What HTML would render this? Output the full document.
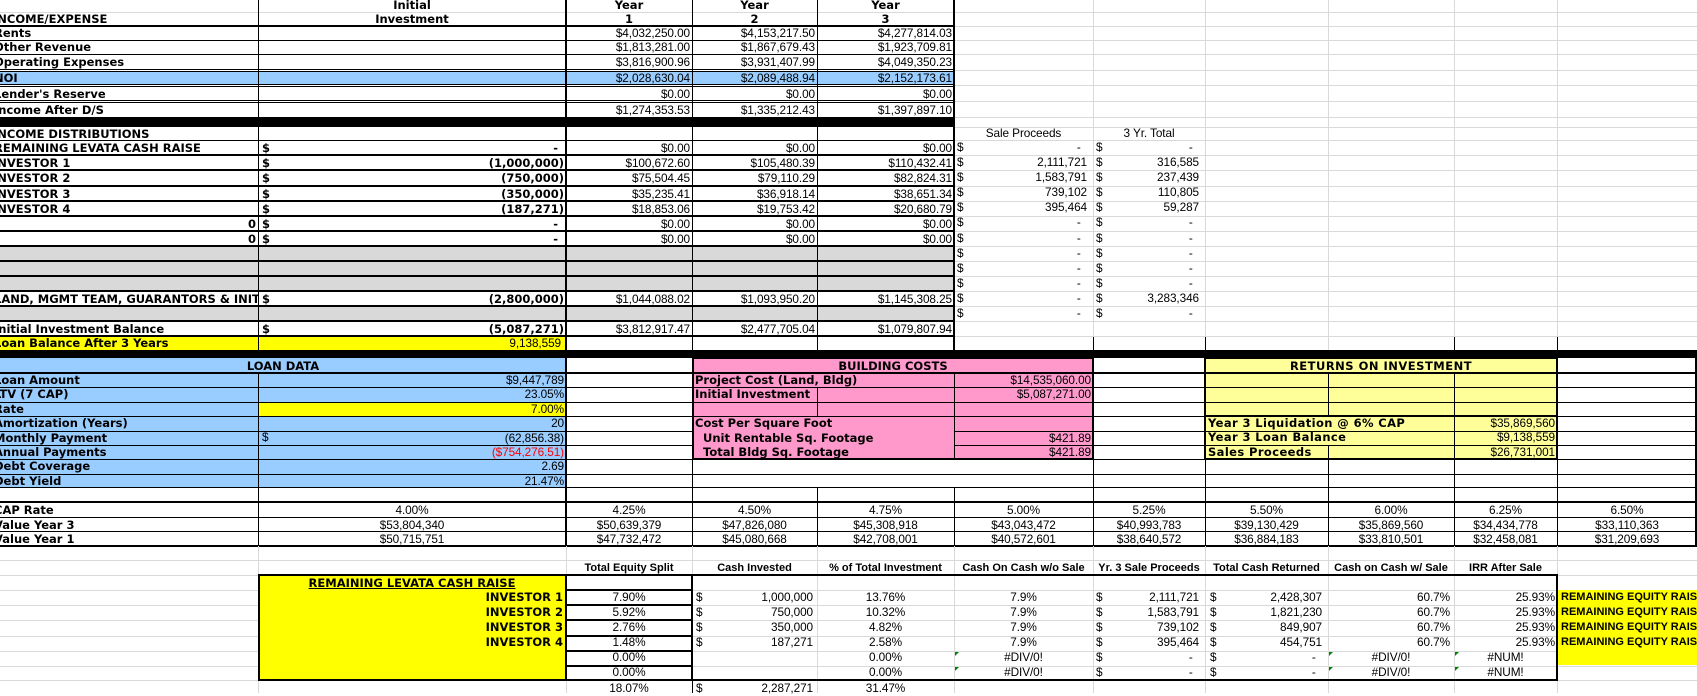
<!DOCTYPE html>
<html><head><meta charset="utf-8"><style>
*{margin:0;padding:0}
body{width:1697px;height:693px;overflow:hidden;background:#fff;position:relative;font-family:"Liberation Sans",Arial,sans-serif}
div{position:absolute}
.k{background:#000}
.g{background:#d9d9d9}
.t{white-space:nowrap;font-size:11.8px;letter-spacing:-0.1px;color:#000;overflow:visible}
.b{font-family:"DejaVu Sans",sans-serif;font-weight:bold;font-size:11.5px;letter-spacing:0}
.r{text-align:right}
.c{text-align:center}
.bx{box-sizing:border-box}
.hd{font-weight:bold;font-size:11px;letter-spacing:0}
</style></head><body>

<!-- light grid right area top -->
<div class="g" style="left:1093px;top:0;width:1px;height:350px"></div>
<div class="g" style="left:1205px;top:0;width:1px;height:350px"></div>
<div class="g" style="left:1328px;top:0;width:1px;height:350px"></div>
<div class="g" style="left:1454px;top:0;width:1px;height:350px"></div>
<div class="g" style="left:1557px;top:0;width:1px;height:350px"></div>
<div class="g" style="left:954px;top:12px;width:743px;height:1px"></div>
<div class="g" style="left:954px;top:26px;width:743px;height:1px"></div>
<div class="g" style="left:954px;top:40px;width:743px;height:1px"></div>
<div class="g" style="left:954px;top:54px;width:743px;height:1px"></div>
<div class="g" style="left:954px;top:70px;width:743px;height:1px"></div>
<div class="g" style="left:954px;top:85px;width:743px;height:1px"></div>
<div class="g" style="left:954px;top:101px;width:743px;height:1px"></div>
<div class="g" style="left:954px;top:117px;width:743px;height:1px"></div>
<div class="g" style="left:954px;top:127px;width:743px;height:1px"></div>
<div class="g" style="left:954px;top:140px;width:743px;height:1px"></div>
<div class="g" style="left:954px;top:155px;width:743px;height:1px"></div>
<div class="g" style="left:954px;top:170px;width:743px;height:1px"></div>
<div class="g" style="left:954px;top:186px;width:743px;height:1px"></div>
<div class="g" style="left:954px;top:201px;width:743px;height:1px"></div>
<div class="g" style="left:954px;top:216px;width:743px;height:1px"></div>
<div class="g" style="left:954px;top:231px;width:743px;height:1px"></div>
<div class="g" style="left:954px;top:246px;width:743px;height:1px"></div>
<div class="g" style="left:954px;top:261px;width:743px;height:1px"></div>
<div class="g" style="left:954px;top:276px;width:743px;height:1px"></div>
<div class="g" style="left:954px;top:291px;width:743px;height:1px"></div>
<div class="g" style="left:954px;top:306px;width:743px;height:1px"></div>
<div class="g" style="left:954px;top:321px;width:743px;height:1px"></div>
<div class="g" style="left:954px;top:336px;width:743px;height:1px"></div>

<!-- top table backgrounds -->
<div style="left:0;top:71px;width:954px;height:13px;background:#99ccff"></div>
<div style="left:0;top:246px;width:954px;height:45px;background:#d9d9d9"></div>
<div style="left:0;top:306px;width:954px;height:15px;background:#d9d9d9"></div>
<div style="left:0;top:336px;width:566px;height:14px;background:#ffff00"></div>

<!-- top horizontal lines -->
<div class="g" style="left:0;top:12px;width:954px;height:1px"></div>
<div class="k" style="left:0;top:25px;width:954px;height:2px"></div>
<div class="k" style="left:0;top:40px;width:954px;height:1px"></div>
<div class="k" style="left:0;top:54px;width:954px;height:1px"></div>
<div class="k" style="left:0;top:69px;width:954px;height:1px"></div>
<div class="k" style="left:0;top:71px;width:954px;height:1px"></div>
<div class="k" style="left:0;top:84px;width:954px;height:1px"></div>
<div class="k" style="left:0;top:86px;width:954px;height:1px"></div>
<div class="k" style="left:0;top:100px;width:954px;height:1px"></div>
<div class="k" style="left:0;top:102px;width:954px;height:1px"></div>
<div class="k" style="left:0;top:117px;width:954px;height:10px"></div>
<div class="k" style="left:0;top:140px;width:954px;height:1px"></div>
<div class="k" style="left:0;top:154px;width:954px;height:2px"></div>
<div class="k" style="left:0;top:169px;width:954px;height:2px"></div>
<div class="k" style="left:0;top:185px;width:954px;height:2px"></div>
<div class="k" style="left:0;top:200px;width:954px;height:2px"></div>
<div class="k" style="left:0;top:215px;width:954px;height:2px"></div>
<div class="k" style="left:0;top:230px;width:954px;height:2px"></div>
<div class="k" style="left:0;top:245px;width:954px;height:2px"></div>
<div class="k" style="left:0;top:260px;width:954px;height:2px"></div>
<div class="k" style="left:0;top:275px;width:954px;height:2px"></div>
<div class="k" style="left:0;top:290px;width:954px;height:2px"></div>
<div class="k" style="left:0;top:305px;width:954px;height:2px"></div>
<div class="k" style="left:0;top:320px;width:954px;height:2px"></div>
<div class="k" style="left:0;top:335px;width:954px;height:2px"></div>
<div class="k" style="left:0;top:350px;width:1697px;height:8px"></div>
<!-- top verticals -->
<div class="k" style="left:258px;top:0;width:1px;height:350px"></div>
<div class="k" style="left:565px;top:0;width:2px;height:350px"></div>
<div class="k" style="left:692px;top:0;width:1px;height:350px"></div>
<div class="k" style="left:817px;top:0;width:1px;height:350px"></div>
<div class="k" style="left:953px;top:0;width:2px;height:350px"></div>

<!-- middle section lines -->
<div style="left:0;top:358px;width:566px;height:130px;background:#99ccff"></div>
<div style="left:258px;top:402px;width:308px;height:14px;background:#ffff00"></div>
<div class="k" style="left:0;top:372px;width:1697px;height:2px"></div>
<div class="k" style="left:0;top:387px;width:1697px;height:1px"></div>
<div class="k" style="left:0;top:402px;width:1697px;height:1px"></div>
<div class="k" style="left:0;top:416px;width:1697px;height:1px"></div>
<div class="k" style="left:0;top:431px;width:1697px;height:1px"></div>
<div class="k" style="left:0;top:445px;width:1697px;height:1px"></div>
<div class="k" style="left:0;top:459px;width:1697px;height:1px"></div>
<div class="k" style="left:0;top:474px;width:1697px;height:1px"></div>
<div class="k" style="left:0;top:487px;width:1697px;height:1px"></div>
<div class="k" style="left:0;top:501px;width:1697px;height:2px"></div>
<div class="k" style="left:0;top:517px;width:1697px;height:1px"></div>
<div class="k" style="left:0;top:531px;width:1697px;height:1px"></div>
<div class="k" style="left:0;top:545px;width:1697px;height:2px"></div>
<div class="k" style="left:258px;top:373px;width:1px;height:115px"></div>
<div class="k" style="left:258px;top:488px;width:1px;height:58px"></div>
<div class="k" style="left:565px;top:358px;width:2px;height:188px"></div>
<div class="k" style="left:692px;top:358px;width:1px;height:188px"></div>
<div class="k" style="left:817px;top:488px;width:1px;height:58px"></div>
<div class="k" style="left:954px;top:488px;width:1px;height:58px"></div>
<div class="k" style="left:1093px;top:337px;width:1px;height:209px"></div>
<div class="k" style="left:1205px;top:337px;width:1px;height:209px"></div>
<div class="k" style="left:1328px;top:459px;width:1px;height:87px"></div>
<div class="k" style="left:1454px;top:337px;width:1px;height:209px"></div>
<div class="k" style="left:1557px;top:337px;width:1px;height:209px"></div>
<div class="k" style="left:1695px;top:358px;width:2px;height:188px"></div>

<!-- building costs pink -->
<div class="bx" style="left:692px;top:357px;width:402px;height:103px;background:#ff99cc;border:2px solid #000"></div>
<div class="k" style="left:692px;top:372px;width:402px;height:2px"></div>
<div class="k" style="left:692px;top:387px;width:402px;height:1px"></div>
<div class="k" style="left:692px;top:402px;width:402px;height:1px"></div>
<div class="k" style="left:692px;top:416px;width:402px;height:1px"></div>
<div class="k" style="left:954px;top:431px;width:140px;height:1px"></div>
<div class="k" style="left:954px;top:445px;width:140px;height:1px"></div>
<div class="k" style="left:817px;top:387px;width:1px;height:29px"></div>
<div class="k" style="left:954px;top:373px;width:1px;height:86px"></div>

<!-- returns yellow -->
<div class="bx" style="left:1204px;top:357px;width:354px;height:103px;background:#ffff99;border:2px solid #000"></div>
<div class="k" style="left:1204px;top:372px;width:354px;height:2px"></div>
<div class="k" style="left:1204px;top:387px;width:354px;height:1px"></div>
<div class="k" style="left:1204px;top:402px;width:354px;height:1px"></div>
<div class="k" style="left:1204px;top:415px;width:354px;height:2px"></div>
<div class="k" style="left:1204px;top:431px;width:354px;height:1px"></div>
<div class="k" style="left:1204px;top:445px;width:354px;height:1px"></div>
<div class="k" style="left:1328px;top:373px;width:1px;height:43px"></div>
<div class="k" style="left:1328px;top:445px;width:1px;height:14px"></div>
<div class="k" style="left:1454px;top:373px;width:1px;height:86px"></div>

<!-- bottom grid -->
<div class="g" style="left:0;top:560px;width:1697px;height:1px"></div>
<div class="g" style="left:0;top:575px;width:1697px;height:1px"></div>
<div class="g" style="left:0;top:590px;width:1697px;height:1px"></div>
<div class="g" style="left:0;top:605px;width:1697px;height:1px"></div>
<div class="g" style="left:0;top:620px;width:1697px;height:1px"></div>
<div class="g" style="left:0;top:636px;width:1697px;height:1px"></div>
<div class="g" style="left:0;top:651px;width:1697px;height:1px"></div>
<div class="g" style="left:0;top:666px;width:1697px;height:1px"></div>
<div class="g" style="left:0;top:680px;width:1697px;height:1px"></div>
<div class="g" style="left:258px;top:546px;width:1px;height:147px"></div>
<div class="g" style="left:566px;top:546px;width:1px;height:147px"></div>
<div class="g" style="left:692px;top:546px;width:1px;height:147px"></div>
<div class="g" style="left:817px;top:546px;width:1px;height:147px"></div>
<div class="g" style="left:954px;top:546px;width:1px;height:147px"></div>
<div class="g" style="left:1093px;top:546px;width:1px;height:147px"></div>
<div class="g" style="left:1205px;top:546px;width:1px;height:147px"></div>
<div class="g" style="left:1328px;top:546px;width:1px;height:147px"></div>
<div class="g" style="left:1454px;top:546px;width:1px;height:147px"></div>
<div class="g" style="left:1557px;top:546px;width:1px;height:147px"></div>
<div style="left:1557px;top:590px;width:140px;height:75px;background:#ffff00"></div>
<div class="bx" style="left:258px;top:574px;width:309px;height:107px;background:#ffff00;border:2px solid #000"></div>
<div class="bx" style="left:565px;top:574px;width:993px;height:107px;border:2px solid #000"></div>
<div class="k" style="left:565px;top:589px;width:128px;height:2px"></div>
<div class="k" style="left:565px;top:604px;width:128px;height:2px"></div>
<div class="k" style="left:565px;top:619px;width:128px;height:2px"></div>
<div class="k" style="left:565px;top:635px;width:128px;height:2px"></div>
<div class="k" style="left:565px;top:650px;width:128px;height:2px"></div>
<div class="k" style="left:565px;top:665px;width:128px;height:2px"></div>
<div class="k" style="left:691px;top:575px;width:2px;height:105px"></div>
<div class="k" style="left:692px;top:680px;width:1px;height:13px"></div>
<!-- green triangles -->
<div style="left:955px;top:652px;width:0;height:0;border-top:4px solid #008000;border-right:4px solid transparent"></div>
<div style="left:955px;top:667px;width:0;height:0;border-top:4px solid #008000;border-right:4px solid transparent"></div>
<div style="left:1329px;top:652px;width:0;height:0;border-top:4px solid #008000;border-right:4px solid transparent"></div>
<div style="left:1329px;top:667px;width:0;height:0;border-top:4px solid #008000;border-right:4px solid transparent"></div>
<div style="left:1455px;top:652px;width:0;height:0;border-top:4px solid #008000;border-right:4px solid transparent"></div>
<div style="left:1455px;top:667px;width:0;height:0;border-top:4px solid #008000;border-right:4px solid transparent"></div>

<!-- ===== TEXT ===== -->
<div class="t b c" style="left:258px;top:-2px;width:308px;line-height:14px">Initial</div>
<div class="t b c" style="left:258px;top:12px;width:308px;line-height:14px">Investment</div>
<div class="t b c" style="left:566px;top:-2px;width:126px;line-height:14px">Year</div>
<div class="t b c" style="left:566px;top:12px;width:126px;line-height:14px">1</div>
<div class="t b c" style="left:692px;top:-2px;width:125px;line-height:14px">Year</div>
<div class="t b c" style="left:692px;top:12px;width:125px;line-height:14px">2</div>
<div class="t b c" style="left:817px;top:-2px;width:137px;line-height:14px">Year</div>
<div class="t b c" style="left:817px;top:12px;width:137px;line-height:14px">3</div>

<div class="t b" style="left:-7px;top:12px;line-height:14px">INCOME/EXPENSE</div>
<div class="t b" style="left:-6px;top:26px;line-height:14px">Rents</div>
<div class="t b" style="left:-6px;top:40px;line-height:14px">Other Revenue</div>
<div class="t b" style="left:-6px;top:55px;line-height:14px">Operating Expenses</div>
<div class="t b" style="left:-6px;top:71px;line-height:14px">NOI</div>
<div class="t b" style="left:-6px;top:87px;line-height:14px">Lender's Reserve</div>
<div class="t b" style="left:-6px;top:103px;line-height:14px">Income After D/S</div>
<div class="t b" style="left:-7px;top:127px;line-height:14px">INCOME DISTRIBUTIONS</div>
<div class="t b" style="left:-6px;top:141px;line-height:14px">REMAINING LEVATA CASH RAISE</div>
<div class="t b" style="left:-7px;top:156px;line-height:14px">INVESTOR 1</div>
<div class="t b" style="left:-7px;top:171px;line-height:15px">INVESTOR 2</div>
<div class="t b" style="left:-7px;top:187px;line-height:14px">INVESTOR 3</div>
<div class="t b" style="left:-7px;top:202px;line-height:14px">INVESTOR 4</div>
<div class="t b r" style="left:0;top:217px;width:256px;line-height:14px">0</div>
<div class="t b r" style="left:0;top:232px;width:256px;line-height:14px">0</div>
<div class="t b" style="left:-6px;top:292px;width:264px;overflow:hidden;line-height:14px">LAND, MGMT TEAM, GUARANTORS &amp; INITIAL</div>
<div class="t b" style="left:-6px;top:322px;line-height:14px">Initial Investment Balance</div>
<div class="t b" style="left:-6px;top:337px;line-height:13px">Loan Balance After 3 Years</div>

<!-- B column $ -->
<div class="t b" style="left:262px;top:141px;line-height:14px">$</div>
<div class="t b" style="left:262px;top:156px;line-height:14px">$</div>
<div class="t b" style="left:262px;top:171px;line-height:15px">$</div>
<div class="t b" style="left:262px;top:187px;line-height:14px">$</div>
<div class="t b" style="left:262px;top:202px;line-height:14px">$</div>
<div class="t b" style="left:262px;top:217px;line-height:14px">$</div>
<div class="t b" style="left:262px;top:232px;line-height:14px">$</div>
<div class="t b" style="left:262px;top:292px;line-height:14px">$</div>
<div class="t b" style="left:262px;top:322px;line-height:14px">$</div>
<div class="t b r" style="left:258px;top:141px;width:300px;line-height:14px">-</div>
<div class="t b r" style="left:258px;top:156px;width:306px;line-height:14px">(1,000,000)</div>
<div class="t b r" style="left:258px;top:171px;width:306px;line-height:15px">(750,000)</div>
<div class="t b r" style="left:258px;top:187px;width:306px;line-height:14px">(350,000)</div>
<div class="t b r" style="left:258px;top:202px;width:306px;line-height:14px">(187,271)</div>
<div class="t b r" style="left:258px;top:217px;width:300px;line-height:14px">-</div>
<div class="t b r" style="left:258px;top:232px;width:300px;line-height:14px">-</div>
<div class="t b r" style="left:258px;top:292px;width:306px;line-height:14px">(2,800,000)</div>
<div class="t b r" style="left:258px;top:322px;width:306px;line-height:14px">(5,087,271)</div>
<div class="t r" style="left:258px;top:337px;width:303px;line-height:13px">9,138,559</div>

<!-- C D E values -->
<div class="t r" style="left:566px;top:26px;width:124px;line-height:14px">$4,032,250.00</div>
<div class="t r" style="left:692px;top:26px;width:123px;line-height:14px">$4,153,217.50</div>
<div class="t r" style="left:817px;top:26px;width:135px;line-height:14px">$4,277,814.03</div>
<div class="t r" style="left:566px;top:40px;width:124px;line-height:14px">$1,813,281.00</div>
<div class="t r" style="left:692px;top:40px;width:123px;line-height:14px">$1,867,679.43</div>
<div class="t r" style="left:817px;top:40px;width:135px;line-height:14px">$1,923,709.81</div>
<div class="t r" style="left:566px;top:55px;width:124px;line-height:14px">$3,816,900.96</div>
<div class="t r" style="left:692px;top:55px;width:123px;line-height:14px">$3,931,407.99</div>
<div class="t r" style="left:817px;top:55px;width:135px;line-height:14px">$4,049,350.23</div>
<div class="t r" style="left:566px;top:71px;width:124px;line-height:14px">$2,028,630.04</div>
<div class="t r" style="left:692px;top:71px;width:123px;line-height:14px">$2,089,488.94</div>
<div class="t r" style="left:817px;top:71px;width:135px;line-height:14px">$2,152,173.61</div>
<div class="t r" style="left:566px;top:87px;width:124px;line-height:14px">$0.00</div>
<div class="t r" style="left:692px;top:87px;width:123px;line-height:14px">$0.00</div>
<div class="t r" style="left:817px;top:87px;width:135px;line-height:14px">$0.00</div>
<div class="t r" style="left:566px;top:103px;width:124px;line-height:14px">$1,274,353.53</div>
<div class="t r" style="left:692px;top:103px;width:123px;line-height:14px">$1,335,212.43</div>
<div class="t r" style="left:817px;top:103px;width:135px;line-height:14px">$1,397,897.10</div>

<div class="t r" style="left:566px;top:141px;width:124px;line-height:14px">$0.00</div>
<div class="t r" style="left:692px;top:141px;width:123px;line-height:14px">$0.00</div>
<div class="t r" style="left:817px;top:141px;width:135px;line-height:14px">$0.00</div>
<div class="t r" style="left:566px;top:156px;width:124px;line-height:14px">$100,672.60</div>
<div class="t r" style="left:692px;top:156px;width:123px;line-height:14px">$105,480.39</div>
<div class="t r" style="left:817px;top:156px;width:135px;line-height:14px">$110,432.41</div>
<div class="t r" style="left:566px;top:171px;width:124px;line-height:15px">$75,504.45</div>
<div class="t r" style="left:692px;top:171px;width:123px;line-height:15px">$79,110.29</div>
<div class="t r" style="left:817px;top:171px;width:135px;line-height:15px">$82,824.31</div>
<div class="t r" style="left:566px;top:187px;width:124px;line-height:14px">$35,235.41</div>
<div class="t r" style="left:692px;top:187px;width:123px;line-height:14px">$36,918.14</div>
<div class="t r" style="left:817px;top:187px;width:135px;line-height:14px">$38,651.34</div>
<div class="t r" style="left:566px;top:202px;width:124px;line-height:14px">$18,853.06</div>
<div class="t r" style="left:692px;top:202px;width:123px;line-height:14px">$19,753.42</div>
<div class="t r" style="left:817px;top:202px;width:135px;line-height:14px">$20,680.79</div>
<div class="t r" style="left:566px;top:217px;width:124px;line-height:14px">$0.00</div>
<div class="t r" style="left:692px;top:217px;width:123px;line-height:14px">$0.00</div>
<div class="t r" style="left:817px;top:217px;width:135px;line-height:14px">$0.00</div>
<div class="t r" style="left:566px;top:232px;width:124px;line-height:14px">$0.00</div>
<div class="t r" style="left:692px;top:232px;width:123px;line-height:14px">$0.00</div>
<div class="t r" style="left:817px;top:232px;width:135px;line-height:14px">$0.00</div>
<div class="t r" style="left:566px;top:292px;width:124px;line-height:14px">$1,044,088.02</div>
<div class="t r" style="left:692px;top:292px;width:123px;line-height:14px">$1,093,950.20</div>
<div class="t r" style="left:817px;top:292px;width:135px;line-height:14px">$1,145,308.25</div>
<div class="t r" style="left:566px;top:322px;width:124px;line-height:14px">$3,812,917.47</div>
<div class="t r" style="left:692px;top:322px;width:123px;line-height:14px">$2,477,705.04</div>
<div class="t r" style="left:817px;top:322px;width:135px;line-height:14px">$1,079,807.94</div>

<!-- F & G sale proceeds -->
<div class="t c" style="left:954px;top:127px;width:139px;line-height:13px">Sale Proceeds</div>
<div class="t c" style="left:1093px;top:127px;width:112px;line-height:13px">3 Yr. Total</div>
<div class="t" style="left:957px;top:140px;line-height:15.1px">$<br>$<br>$<br>$<br>$<br>$<br>$<br>$<br>$<br>$<br>$<br>$</div>
<div class="t" style="left:1096px;top:140px;line-height:15.1px">$<br>$<br>$<br>$<br>$<br>$<br>$<br>$<br>$<br>$<br>$<br>$</div>
<div class="t r" style="left:954px;top:140px;width:133px;line-height:15.1px">-&nbsp;&nbsp;<br>2,111,721<br>1,583,791<br>739,102<br>395,464<br>-&nbsp;&nbsp;<br>-&nbsp;&nbsp;<br>-&nbsp;&nbsp;<br>-&nbsp;&nbsp;<br>-&nbsp;&nbsp;<br>-&nbsp;&nbsp;<br>-&nbsp;&nbsp;</div>
<div class="t r" style="left:1093px;top:140px;width:106px;line-height:15.1px">-&nbsp;&nbsp;<br>316,585<br>237,439<br>110,805<br>59,287<br>-&nbsp;&nbsp;<br>-&nbsp;&nbsp;<br>-&nbsp;&nbsp;<br>-&nbsp;&nbsp;<br>-&nbsp;&nbsp;<br>3,283,346<br>-&nbsp;&nbsp;</div>

<!-- loan data -->
<div class="t b c" style="left:0;top:359px;width:566px;line-height:14px">LOAN DATA</div>
<div class="t b" style="left:-6px;top:373px;line-height:14.4px">Loan Amount<br>LTV (7 CAP)<br>Rate<br>Amortization (Years)<br>Monthly Payment<br>Annual Payments<br>Debt Coverage<br>Debt Yield</div>
<div class="t r" style="left:258px;top:373px;width:306px;line-height:14.4px">$9,447,789<br>23.05%<br>7.00%<br>20<br>(62,856.38)<br><span style="color:#ff0000">($754,276.51)</span><br>2.69<br>21.47%</div>
<div class="t" style="left:262px;top:430px;line-height:14.4px">$</div>

<!-- building costs -->
<div class="t b c" style="left:692px;top:359px;width:402px;line-height:14px">BUILDING COSTS</div>
<div class="t b" style="left:695px;top:373px;line-height:14.4px">Project Cost (Land, Bldg)<br>Initial Investment<br>&nbsp;<br>Cost Per Square Foot<br>&nbsp;&nbsp;Unit Rentable Sq. Footage<br>&nbsp;&nbsp;Total Bldg Sq. Footage</div>
<div class="t r" style="left:954px;top:373px;width:137px;line-height:14.4px">$14,535,060.00<br>$5,087,271.00<br>&nbsp;<br>&nbsp;<br>$421.89<br>$421.89</div>

<!-- returns -->
<div class="t b c" style="left:1205px;top:359px;width:352px;line-height:14px;letter-spacing:0.5px">RETURNS ON INVESTMENT</div>
<div class="t b" style="left:1208px;top:416px;line-height:14.4px;letter-spacing:0.4px">Year 3 Liquidation @ 6% CAP<br>Year 3 Loan Balance<br>Sales Proceeds</div>
<div class="t r" style="left:1454px;top:416px;width:101px;line-height:14.4px">$35,869,560<br>$9,138,559<br>$26,731,001</div>

<!-- CAP rows -->
<div class="t b" style="left:-6px;top:503px;line-height:14.5px">CAP Rate<br>Value Year 3<br>Value Year 1</div>
<div class="t c" style="left:258px;top:503px;width:308px;line-height:14.5px">4.00%<br>$53,804,340<br>$50,715,751</div>
<div class="t c" style="left:566px;top:503px;width:126px;line-height:14.5px">4.25%<br>$50,639,379<br>$47,732,472</div>
<div class="t c" style="left:692px;top:503px;width:125px;line-height:14.5px">4.50%<br>$47,826,080<br>$45,080,668</div>
<div class="t c" style="left:817px;top:503px;width:137px;line-height:14.5px">4.75%<br>$45,308,918<br>$42,708,001</div>
<div class="t c" style="left:954px;top:503px;width:139px;line-height:14.5px">5.00%<br>$43,043,472<br>$40,572,601</div>
<div class="t c" style="left:1093px;top:503px;width:112px;line-height:14.5px">5.25%<br>$40,993,783<br>$38,640,572</div>
<div class="t c" style="left:1205px;top:503px;width:123px;line-height:14.5px">5.50%<br>$39,130,429<br>$36,884,183</div>
<div class="t c" style="left:1328px;top:503px;width:126px;line-height:14.5px">6.00%<br>$35,869,560<br>$33,810,501</div>
<div class="t c" style="left:1454px;top:503px;width:103px;line-height:14.5px">6.25%<br>$34,434,778<br>$32,458,081</div>
<div class="t c" style="left:1557px;top:503px;width:140px;line-height:14.5px">6.50%<br>$33,110,363<br>$31,209,693</div>

<!-- bottom headers -->
<div class="t c hd" style="left:566px;top:561px;width:126px;line-height:14px">Total Equity Split</div>
<div class="t c hd" style="left:692px;top:561px;width:125px;line-height:14px">Cash Invested</div>
<div class="t c hd" style="left:817px;top:561px;width:137px;line-height:14px">% of Total Investment</div>
<div class="t c hd" style="left:954px;top:561px;width:139px;line-height:14px">Cash On Cash w/o Sale</div>
<div class="t c hd" style="left:1093px;top:561px;width:112px;line-height:14px">Yr. 3 Sale Proceeds</div>
<div class="t c hd" style="left:1205px;top:561px;width:123px;line-height:14px">Total Cash Returned</div>
<div class="t c hd" style="left:1328px;top:561px;width:126px;line-height:14px">Cash on Cash w/ Sale</div>
<div class="t c hd" style="left:1454px;top:561px;width:103px;line-height:14px">IRR After Sale</div>

<!-- yellow box labels -->
<div class="t b c" style="left:258px;top:576px;width:308px;line-height:14px;text-decoration:underline">REMAINING LEVATA CASH RAISE</div>
<div class="t b r" style="left:258px;top:590px;width:305px;line-height:15.1px">INVESTOR 1<br>INVESTOR 2<br>INVESTOR 3<br>INVESTOR 4</div>

<div class="t c" style="left:566px;top:590px;width:126px;line-height:15.1px">7.90%<br>5.92%<br>2.76%<br>1.48%<br>0.00%<br>0.00%<br>18.07%</div>
<div class="t" style="left:696px;top:590px;line-height:15.1px">$<br>$<br>$<br>$<br>&nbsp;<br>&nbsp;<br>$</div>
<div class="t r" style="left:692px;top:590px;width:121px;line-height:15.1px">1,000,000<br>750,000<br>350,000<br>187,271<br>&nbsp;<br>&nbsp;<br>2,287,271</div>
<div class="t c" style="left:817px;top:590px;width:137px;line-height:15.1px">13.76%<br>10.32%<br>4.82%<br>2.58%<br>0.00%<br>0.00%<br>31.47%</div>
<div class="t c" style="left:954px;top:590px;width:139px;line-height:15.1px">7.9%<br>7.9%<br>7.9%<br>7.9%<br>#DIV/0!<br>#DIV/0!</div>
<div class="t" style="left:1096px;top:590px;line-height:15.1px">$<br>$<br>$<br>$<br>$<br>$</div>
<div class="t r" style="left:1093px;top:590px;width:106px;line-height:15.1px">2,111,721<br>1,583,791<br>739,102<br>395,464<br>-&nbsp;&nbsp;<br>-&nbsp;&nbsp;</div>
<div class="t" style="left:1210px;top:590px;line-height:15.1px">$<br>$<br>$<br>$<br>$<br>$</div>
<div class="t r" style="left:1205px;top:590px;width:117px;line-height:15.1px">2,428,307<br>1,821,230<br>849,907<br>454,751<br>-&nbsp;&nbsp;<br>-&nbsp;&nbsp;</div>
<div class="t r" style="left:1328px;top:590px;width:122px;line-height:15.1px">60.7%<br>60.7%<br>60.7%<br>60.7%</div>
<div class="t c" style="left:1328px;top:650px;width:126px;line-height:15.1px">#DIV/0!<br>#DIV/0!</div>
<div class="t r" style="left:1454px;top:590px;width:101px;line-height:15.1px">25.93%<br>25.93%<br>25.93%<br>25.93%</div>
<div class="t c" style="left:1454px;top:650px;width:103px;line-height:15.1px">#NUM!<br>#NUM!</div>
<div class="t hd" style="left:1561px;top:590px;line-height:15.1px">REMAINING EQUITY RAISE<br>REMAINING EQUITY RAISE<br>REMAINING EQUITY RAISE<br>REMAINING EQUITY RAISE</div>

</body></html>
